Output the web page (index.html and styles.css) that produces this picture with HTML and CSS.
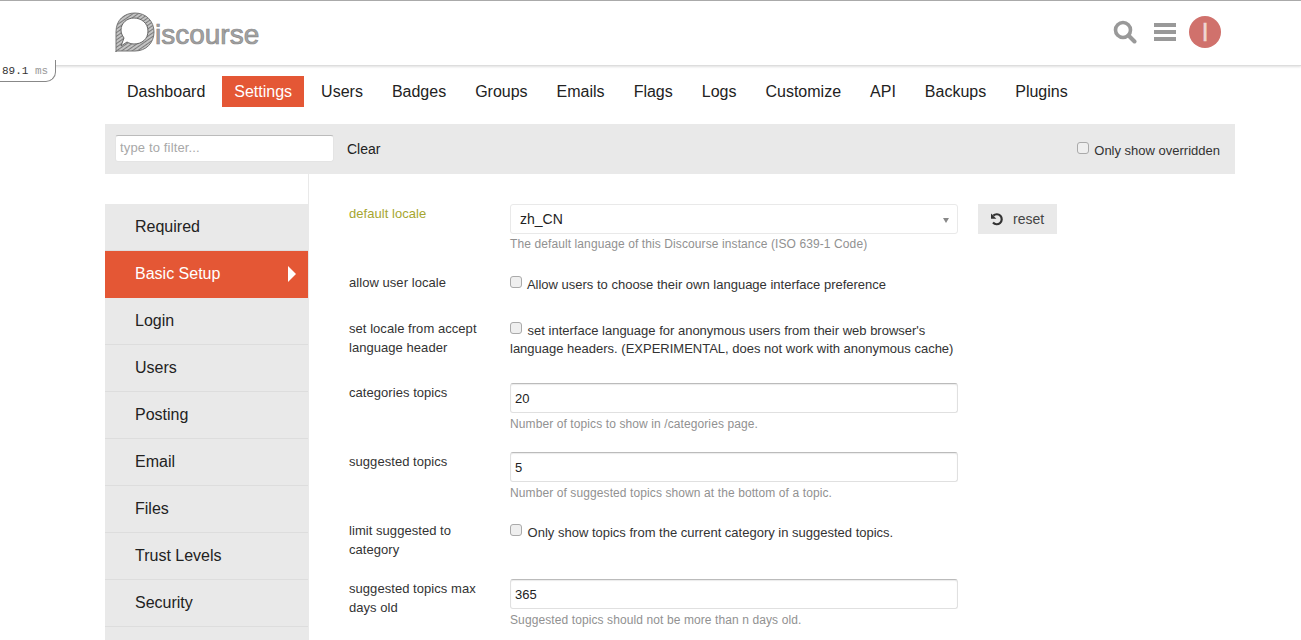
FILE: index.html
```html
<!DOCTYPE html>
<html lang="en">
<head>
    <meta charset="UTF-8">
    <title>Admin Settings</title>
    <link rel="stylesheet" href="styles.css">
</head>
<body>
<div class="page">
    <header class="site-header">
        <div class="wrap header-inner">
            <a class="logo">
                <svg class="logo-mark" width="40" height="42" viewBox="0 0 40 42">
                    <defs>
                        <pattern id="hatch" width="3" height="3" patternUnits="userSpaceOnUse" patternTransform="rotate(-35)">
                            <rect width="3" height="3" fill="#c4c4c4"/>
                            <rect width="3" height="1" fill="#7a7a7a"/>
                        </pattern>
                    </defs>
                    <path fill="url(#hatch)" stroke="#777" stroke-width="1" d="M1 41V21C1 9 9 2 20 2s19 8 19 19-8 19-19 19H1z"/>
                    <path fill="#fff" stroke="#666" stroke-width="1" d="M6 35l3-8c-2-3-3-5-3-8 0-7 6-12 13-12s14 5 14 13-6 13-14 13c-3 0-5-1-7-2l-6 4z"/>
                </svg>
                <span class="logo-text">iscourse</span>
            </a>
            <div class="header-icons">
                <svg class="icon-search" width="24" height="24" viewBox="0 0 24 24">
                    <circle cx="10" cy="10" r="7.5" fill="none" stroke="#999" stroke-width="3.6"/>
                    <path d="M15.5 15.5l6 6" stroke="#999" stroke-width="4" stroke-linecap="round"/>
                </svg>
                <div class="icon-menu"><span></span><span></span><span></span></div>
                <div class="avatar">I</div>
            </div>
        </div>
    </header>
    <div class="profiler"><span>89.1</span> <span class="unit">ms</span></div>

    <div class="wrap">
        <ul class="admin-nav">
            <li>Dashboard</li>
            <li class="active">Settings</li>
            <li>Users</li>
            <li>Badges</li>
            <li>Groups</li>
            <li>Emails</li>
            <li>Flags</li>
            <li>Logs</li>
            <li>Customize</li>
            <li>API</li>
            <li>Backups</li>
            <li>Plugins</li>
        </ul>

        <div class="filter-bar">
            <input class="filter-input" type="text" placeholder="type to filter...">
            <span class="filter-clear">Clear</span>
            <label class="filter-check"><input type="checkbox"> Only show overridden</label>
        </div>

        <div class="settings-layout">
            <ul class="side-nav">
                <li>Required</li>
                <li class="active">Basic Setup<i class="arrow"></i></li>
                <li>Login</li>
                <li>Users</li>
                <li>Posting</li>
                <li>Email</li>
                <li>Files</li>
                <li>Trust Levels</li>
                <li>Security</li>
                <li></li>
            </ul>

            <div class="settings-list">
                <div class="row">
                    <div class="row-label changed">default locale</div>
                    <div class="row-value">
                        <div class="select-box">zh_CN<i class="caret"></i></div>
                        <div class="desc">The default language of this Discourse instance (ISO 639-1 Code)</div>
                    </div>
                    <button class="reset-btn" type="button">
                        <svg width="14" height="14" viewBox="0 0 14 14">
                            <path d="M3.3 3.6A5 5 0 1 1 3 10.6" fill="none" stroke="#333" stroke-width="2.2"/>
                            <path d="M1 1.4v5.4h5.4z" fill="#333"/>
                        </svg>
                        reset
                    </button>
                </div>

                <div class="row">
                    <div class="row-label">allow user locale</div>
                    <div class="row-value check-value">
                        <input type="checkbox"> Allow users to choose their own language interface preference
                    </div>
                </div>

                <div class="row">
                    <div class="row-label">set locale from accept language header</div>
                    <div class="row-value check-value">
                        <input type="checkbox"> set interface language for anonymous users from their web browser's language headers. (EXPERIMENTAL, does not work with anonymous cache)
                    </div>
                </div>

                <div class="row">
                    <div class="row-label">categories topics</div>
                    <div class="row-value">
                        <input class="text-input" type="text" value="20">
                        <div class="desc">Number of topics to show in /categories page.</div>
                    </div>
                </div>

                <div class="row">
                    <div class="row-label">suggested topics</div>
                    <div class="row-value">
                        <input class="text-input" type="text" value="5">
                        <div class="desc">Number of suggested topics shown at the bottom of a topic.</div>
                    </div>
                </div>

                <div class="row">
                    <div class="row-label">limit suggested to category</div>
                    <div class="row-value check-value">
                        <input type="checkbox"> Only show topics from the current category in suggested topics.
                    </div>
                </div>

                <div class="row">
                    <div class="row-label">suggested topics max days old</div>
                    <div class="row-value">
                        <input class="text-input" type="text" value="365">
                        <div class="desc">Suggested topics should not be more than n days old.</div>
                    </div>
                </div>
            </div>
        </div>
    </div>
</div>
</body>
</html>
```

FILE: styles.css
```css
html, body {
    margin: 0;
    padding: 0;
    height: 100%;
    overflow: hidden;
}
body {
    font-family: "Liberation Sans", Arial, sans-serif;
    color: #222;
    background: #fff;
}
ul {
    list-style: none;
    margin: 0;
    padding: 0;
}
.page {
    position: relative;
    height: 640px;
    overflow: hidden;
}
.wrap {
    width: 1130px;
    margin-left: 105px;
}

/* header */
.site-header {
    height: 64px;
    border-top: 1px solid #aaa;
    border-bottom: 1px solid #ddd;
    box-shadow: 0 1px 2px rgba(0, 0, 0, 0.12);
}
.header-inner {
    display: flex;
    align-items: center;
    justify-content: space-between;
    height: 64px;
}
.logo {
    display: flex;
    align-items: center;
    margin-left: 10px;
}
.logo-mark {
    margin-top: -2px;
}
.logo-text {
    margin-top: 4px;
    font-size: 28px;
    color: #a3a3a3;
    -webkit-text-stroke: 0.7px #8a8a8a;
}
.header-icons {
    display: flex;
    align-items: center;
    margin: -2px 14px 0 0;
}
.icon-search {
    margin-right: 17px;
    display: block;
}
.icon-menu {
    display: flex;
    flex-direction: column;
    gap: 3px;
    width: 22px;
    margin-right: 13px;
}
.icon-menu span {
    display: block;
    height: 4px;
    background: #999;
}
.avatar {
    width: 32px;
    height: 32px;
    border-radius: 50%;
    background: #d0716c;
    color: #f0d5d3;
    -webkit-text-stroke: 0.4px #f0d5d3;
    font-size: 26px;
    line-height: 32px;
    text-align: center;
}
.profiler {
    position: absolute;
    left: -1px;
    top: 60px;
    padding: 4px 7px 2px 2px;
    border: 1px solid #888;
    border-top: 0;
    border-radius: 0 0 10px 0;
    background: #fff;
    font-family: "Liberation Mono", monospace;
    font-size: 11px;
    line-height: 15px;
    color: #333;
}
.profiler .unit {
    color: #999;
}

/* admin nav */
.admin-nav {
    display: flex;
    gap: 5px;
    margin: 10px 0 17px 10px;
}
.admin-nav li {
    padding: 0 12px;
    font-size: 16px;
    line-height: 31px;
}
.admin-nav li.active {
    background: #e45735;
    color: #fff;
}

/* filter */
.filter-bar {
    display: flex;
    align-items: center;
    height: 50px;
    padding: 0 15px 0 10px;
    background: #e9e9e9;
    box-sizing: border-box;
}
.filter-input {
    width: 219px;
    height: 27px;
    margin-top: -2px;
    box-sizing: border-box;
    padding: 0 4px 2px;
    border: 1px solid #e4e4e4;
    border-top-color: #bbb;
    border-radius: 3px;
    background: #fff;
    font-family: inherit;
    font-size: 13px;
    letter-spacing: 0.15px;
}
.filter-input::placeholder {
    color: #a8a8a8;
}
.filter-clear {
    margin-left: 13px;
    font-size: 14px;
}
.filter-check {
    margin-left: auto;
    font-size: 13px;
    line-height: 19px;
    margin-top: 2px;
    color: #333;
}
input[type="checkbox"] {
    appearance: none;
    -webkit-appearance: none;
    display: inline-block;
    box-sizing: border-box;
    width: 12px;
    height: 12px;
    margin: 0 2px 0 0;
    vertical-align: 1px;
    border: 1px solid #aaa;
    border-radius: 3px;
    background: #efefef;
}

/* layout */
.settings-layout {
    display: flex;
}
.side-nav {
    width: 203px;
    padding-top: 30px;
    border-right: 1px solid #e9e9e9;
    flex-shrink: 0;
}
.side-nav li {
    position: relative;
    height: 46px;
    padding-left: 30px;
    border-bottom: 1px solid #ddd;
    background: #e9e9e9;
    font-size: 16px;
    line-height: 45px;
}
.side-nav li.active {
    background: #e45735;
    color: #fff;
    border-bottom-color: #e45735;
}
.arrow {
    position: absolute;
    right: 12px;
    top: 15px;
    border-left: 8px solid #fff;
    border-top: 8px solid transparent;
    border-bottom: 8px solid transparent;
}

/* settings rows */
.settings-list {
    flex: 1;
    padding: 30px 0 0 40px;
}
.row {
    display: flex;
    margin-bottom: 20px;
    font-size: 13px;
    line-height: 19px;
}
.row-label {
    width: 141px;
    margin-right: 20px;
    color: #333;
    letter-spacing: 0.05px;
}
.row-label.changed {
    color: #a6a62f;
}
.row-value {
    width: 448px;
}
.check-value {
    color: #333;
    line-height: 18px;
    padding: 3px 0 5px;
    box-sizing: border-box;
}
.select-box {
    position: relative;
    height: 30px;
    box-sizing: border-box;
    padding-left: 9px;
    border: 1px solid #e9e9e9;
    border-radius: 3px;
    font-size: 14px;
    line-height: 28px;
}
.caret {
    position: absolute;
    right: 8px;
    top: 13px;
    border-top: 5px solid #888;
    border-left: 3px solid transparent;
    border-right: 3px solid transparent;
}
.text-input {
    display: block;
    width: 448px;
    height: 30px;
    box-sizing: border-box;
    padding: 0 4px;
    border: 1px solid #e0e0e0;
    border-top-color: #bbb;
    border-radius: 3px;
    box-shadow: inset 0 1px 1px rgba(0, 0, 0, 0.08);
    font-family: inherit;
    font-size: 13px;
    color: #222;
}
.desc {
    padding-top: 2px;
    margin-bottom: -2px;
    font-size: 12px;
    line-height: 19px;
    letter-spacing: 0.1px;
    color: #919191;
}
.select-box + .desc {
    padding-top: 1px;
    margin-bottom: -1px;
}
.reset-btn {
    display: flex;
    align-items: center;
    gap: 9px;
    height: 30px;
    margin-left: 20px;
    padding: 0 13px 0 12px;
    border: 0;
    background: #e9e9e9;
    color: #444;
    font-family: inherit;
    font-size: 14px;
}
```
